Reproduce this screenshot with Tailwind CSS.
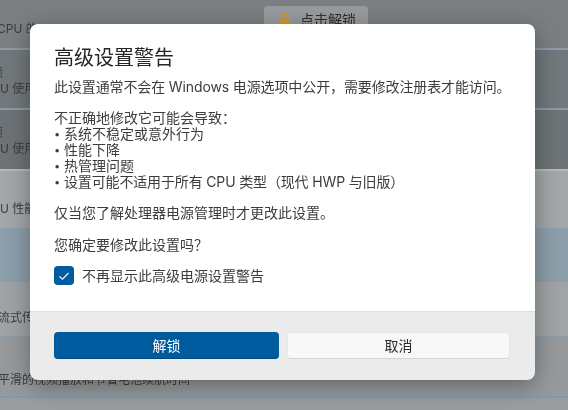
<!DOCTYPE html>
<html lang="zh"><head><meta charset="utf-8"><script src="https://cdn.jsdelivr.net/npm/@tailwindcss/browser@4"></script></head>
<body class="m-0">
<div class="relative w-[568px] h-[410px] overflow-hidden bg-[#8f9496] font-['Inter','Noto_Sans_CJK_SC',sans-serif] text-[12px] text-[#3a3d3f] blur-[0.35px]">
  <div class="flex flex-col h-full">
    <div class="h-[50px] shrink-0 bg-[#7b7f82] border-b-2 border-[#8b9ca8] relative">
      <span class="block pt-[20px] -ml-[3px]">CPU 的</span>
      <div class="absolute left-[264px] top-[6px] w-[104px] h-[30px] rounded-[4px] bg-[#989b9d] flex items-start pt-[4px] pl-[14px] gap-[9px] text-[14px] leading-[20px] text-[#2b2d2f]">
        <svg class="w-[13px] h-[16px] mt-[3px]" viewBox="0 0 13 16"><path d="M3.5 7V4.5a3 3 0 0 1 6 0V7" fill="none" stroke="#cf9a2c" stroke-width="1.8"/><rect x="1" y="7" width="11" height="8" rx="1.5" fill="#d69a26"/></svg>
        <span>点击解锁</span>
      </div>
    </div>
    <div class="h-[60px] shrink-0 bg-[#72787b] border-b-2 border-[#8b9ca8] pt-[15px] leading-[16px]"><div class="-ml-[9px]">项</div><div>U 使用</div></div>
    <div class="h-[59px] shrink-0 bg-[#6d7376] pt-[15px] leading-[16px]"><div class="-ml-[9px]">项</div><div>U 使用</div></div>
    <div class="h-[59px] shrink-0 bg-[#a3a7a9] border-t-2 border-[#b5b9bb] pt-[30px] leading-[16px]"><div>U 性能</div></div>
    <div class="h-[54px] shrink-0 bg-[#8d9fab]"></div>
    <div class="h-[56px] shrink-0 bg-[#a0a4a6] border-b-2 border-[#8b9ca8] pt-[28px] leading-[16px]"><div class="-ml-[2px]">流式传</div></div>
    <div class="h-[60px] shrink-0 bg-[#969a9d] border-b-2 border-[#8298a7] pt-[34px] leading-[16px]"><div class="-ml-[2px]">平滑的视频播放和节省电池续航时间</div></div>
    <div class="flex-1 bg-[#9a9ea0]"></div>
  </div>

  <div class="absolute left-[30px] top-[24px] w-[505px] h-[356px] rounded-[8px] overflow-hidden flex flex-col shadow-[0_6px_24px_rgba(0,0,0,0.35)]">
    <div class="h-[287px] bg-white px-[24px] pt-[21px] text-[14px] leading-[16px] text-[#3c3c3c]">
      <h1 class="text-[20px] leading-[26px] font-normal text-[#262626] m-0">高级设置警告</h1>
      <p class="mt-[8px] whitespace-nowrap tracking-[-0.12px]">此设置通常不会在 Windows 电源选项中公开，需要修改注册表才能访问。</p>
      <p class="mt-[15px]">不正确地修改它可能会导致：</p>
      <ul>
        <li class="flex"><span class="w-[10px] text-[11px]">•</span><span>系统不稳定或意外行为</span></li>
        <li class="flex"><span class="w-[10px] text-[11px]">•</span><span>性能下降</span></li>
        <li class="flex"><span class="w-[10px] text-[11px]">•</span><span>热管理问题</span></li>
        <li class="flex"><span class="w-[10px] text-[11px]">•</span><span class="tracking-[-0.15px]">设置可能不适用于所有 CPU 类型（现代 HWP 与旧版）</span></li>
      </ul>
      <p class="mt-[15px]">仅当您了解处理器电源管理时才更改此设置。</p>
      <p class="mt-[16px]">您确定要修改此设置吗？</p>
      <label class="flex items-center gap-[8px] mt-[13px]">
        <span class="w-[20px] h-[19px] rounded-[4px] bg-[#005a9e] flex items-center justify-center">
          <svg class="w-[12px] h-[12px]" viewBox="0 0 12 12"><path d="M1.5 6.5 4.5 9.2 10.5 3" fill="none" stroke="#e8f2fa" stroke-width="1.3"/></svg>
        </span>
        <span>不再显示此高级电源设置警告</span>
      </label>
    </div>
    <div class="flex-1 bg-[#ebebeb] border-t border-[#dedede] pl-[24px] pr-[25px] pt-[20px] flex gap-[8px] items-start text-[14px]">
      <button class="w-[225px] h-[27px] rounded-[4px] bg-[#005a9e] text-white border-b border-[#004a80]">解锁</button>
      <button class="w-[223px] h-[27px] rounded-[4px] bg-[#f8f8f8] text-[#2b2b2b] border border-[#e6e6e6] border-b-[#d4d4d4]">取消</button>
    </div>
  </div>
</div>
</body></html>
